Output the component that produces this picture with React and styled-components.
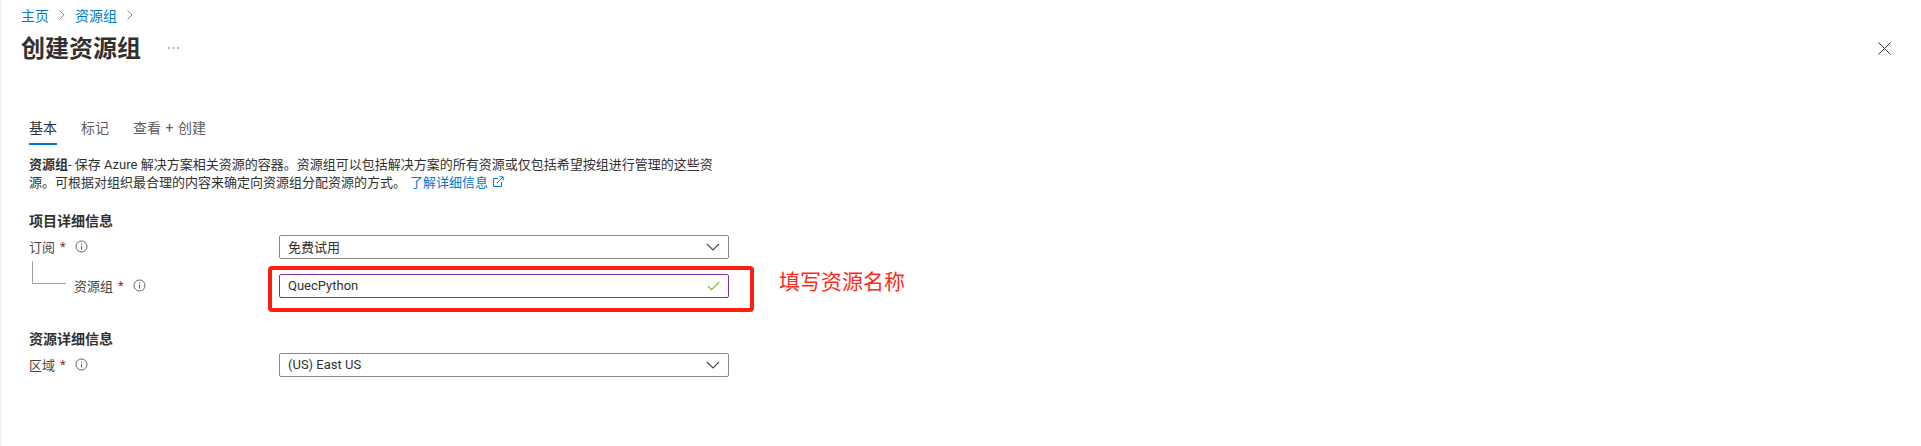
import React from 'react';
import styled, { createGlobalStyle } from 'styled-components';

const GlobalStyle = createGlobalStyle`
    html, body {
        margin: 0;
        padding: 0;
        background: #fff;
    }
    body {
        font-family: Roboto, "Noto Sans CJK SC", sans-serif;
        font-size: 13px;
        color: #323130;
    }
`;

const Page = styled.div`
    position: relative;
    width: 1921px;
    height: 446px;
    overflow: hidden;
    background: #fff;
    box-shadow: inset 1px 0 0 #f1f1f1;
`;

const Breadcrumb = styled.nav`
    display: flex;
    align-items: center;
    height: 30px;
    padding: 0 0 1px 21px;
    box-sizing: border-box;
    gap: 8px;
    font-size: 14px;
    color: #0078d4;
`;

const TitleRow = styled.header`
    display: flex;
    align-items: center;
    height: 36px;
    padding: 0 30px 0 21px;
`;

const Title = styled.h1`
    margin: 0 0 4px;
    font-size: 24px;
    font-weight: 700;
    color: #323130;
`;

const More = styled.span`
    margin-left: 27px;
    display: flex;
    color: #605e5c;
`;

const Close = styled.span`
    margin-left: auto;
    display: flex;
    color: #323130;
`;

const Tabs = styled.div`
    display: flex;
    gap: 24px;
    margin-top: 46px;
`;

const Tab = styled.div`
    height: 31px;
    line-height: 32px;
    font-size: 14px;
    word-spacing: 1px;
    color: ${p => (p.$active ? '#323130' : '#605e5c')};
    border-bottom: 2px solid ${p => (p.$active ? '#0078d4' : 'transparent')};
`;

const Content = styled.main`
    padding-left: 29px;
`;

const Description = styled.p`
    width: 690px;
    margin: 11px 0 0;
    font-size: 13px;
    line-height: 18px;
    color: #323130;
    b {
        font-weight: 700;
    }
`;

const LearnMore = styled.a`
    margin-left: 4px;
    color: #0078d4;
    svg {
        margin-left: 4px;
        vertical-align: -1px;
    }
`;

const SectionTitle = styled.h2`
    margin: ${p => p.$top}px 0 4px;
    height: 20px;
    line-height: 20px;
    font-size: 14px;
    font-weight: 700;
    color: #323130;
`;

const FormRow = styled.div`
    position: relative;
    display: grid;
    grid-template-columns: 250px 450px;
    align-items: center;
    height: 24px;
    margin-top: ${p => p.$top || 0}px;
`;

const Label = styled.label`
    display: flex;
    align-items: center;
    padding-left: ${p => (p.$nested ? 45 : 0)}px;
    padding-bottom: 1px;
    color: #484644;
    font-size: 13px;
`;

const Star = styled.span`
    margin-left: 5px;
    color: #a4262c;
`;

const InfoMark = styled.span`
    display: flex;
    margin-left: 9px;
    color: #605e5c;
`;

const Field = styled.div`
    display: flex;
    align-items: center;
    justify-content: space-between;
    box-sizing: border-box;
    height: 24px;
    padding: 0 8px 1px;
    border: 1px solid ${p => (p.$valid ? '#8a2da5' : '#8a8886')};
    border-radius: 2px;
    font-size: 13px;
    color: #323130;
`;

// the little elbow that ties the resource group row to the subscription row
const TreeLine = styled.span`
    position: absolute;
    left: 3px;
    top: -13px;
    width: 33px;
    height: 22px;
    border-left: 1px solid #a19f9d;
    border-bottom: 1px solid #a19f9d;
`;

// annotation drawn over the screenshot
const RedBox = styled.div`
    position: absolute;
    left: 268px;
    top: 266px;
    width: 486px;
    height: 46px;
    box-sizing: border-box;
    border: 4px solid #ff1f10;
    border-radius: 4px;
`;

const RedNote = styled.span`
    position: absolute;
    left: 779px;
    top: 268px;
    font-size: 21px;
    line-height: 28px;
    color: #ff2a1a;
`;

const Sep = () => (
    <svg width="10" height="12" viewBox="0 0 10 12" fill="none" stroke="#8a8886" strokeWidth="1">
        <path d="M2.5 1.5 L7 6 L2.5 10.5" />
    </svg>
);

const Chevron = () => (
    <svg width="14" height="8" viewBox="0 0 14 8" fill="none" stroke="#484644" strokeWidth="1.1">
        <path d="M1 1 L7 7 L13 1" />
    </svg>
);

const Check = () => (
    <svg width="13" height="10" viewBox="0 0 13 10" fill="none" stroke="#7ab648" strokeWidth="1.2">
        <path d="M1 5 L4.5 8.7 L12.2 1" />
    </svg>
);

const Info = () => (
    <svg width="13" height="13" viewBox="0 0 13 13" fill="none" stroke="currentColor" strokeWidth="1">
        <circle cx="6.5" cy="6.5" r="5.5" />
        <path d="M6.5 5.8 V9.6" />
        <circle cx="6.5" cy="3.9" r="0.6" fill="currentColor" stroke="none" />
    </svg>
);

const ExternalLink = () => (
    <svg width="12" height="12" viewBox="0 0 12 12" fill="none" stroke="#0078d4" strokeWidth="1">
        <path d="M6 2.5 H1.5 V10.5 H9.5 V6" />
        <path d="M5 7 L11 1 M7.5 0.8 H11.2 V4.5" />
    </svg>
);

const Dots = () => (
    <svg width="11" height="4" viewBox="0 0 11 4" fill="currentColor">
        <circle cx="1" cy="2" r="0.8" />
        <circle cx="5.5" cy="2" r="0.8" />
        <circle cx="10" cy="2" r="0.8" />
    </svg>
);

const Cross = () => (
    <svg width="13" height="13" viewBox="0 0 13 13" fill="none" stroke="currentColor" strokeWidth="1">
        <path d="M0.5 0.5 L12.5 12.5 M12.5 0.5 L0.5 12.5" />
    </svg>
);

const App = () => {
    return (
        <Page>
            <GlobalStyle />
            <Breadcrumb>
                <span>主页</span>
                <Sep />
                <span>资源组</span>
                <Sep />
            </Breadcrumb>
            <TitleRow>
                <Title>创建资源组</Title>
                <More><Dots /></More>
                <Close><Cross /></Close>
            </TitleRow>
            <Content>
                <Tabs>
                    <Tab $active>基本</Tab>
                    <Tab>标记</Tab>
                    <Tab>查看 + 创建</Tab>
                </Tabs>
                <Description>
                    <b>资源组</b>- 保存 Azure 解决方案相关资源的容器。资源组可以包括解决方案的所有资源或仅包括希望按组进行管理的这些资源。可根据对组织最合理的内容来确定向资源组分配资源的方式。
                    <LearnMore>了解详细信息<ExternalLink /></LearnMore>
                </Description>
                <SectionTitle $top={19}>项目详细信息</SectionTitle>
                <FormRow>
                    <Label>订阅<Star>*</Star><InfoMark><Info /></InfoMark></Label>
                    <Field>免费试用<Chevron /></Field>
                </FormRow>
                <FormRow $top={15}>
                    <TreeLine />
                    <Label $nested>资源组<Star>*</Star><InfoMark><Info /></InfoMark></Label>
                    <Field $valid>QuecPython<Check /></Field>
                </FormRow>
                <SectionTitle $top={31}>资源详细信息</SectionTitle>
                <FormRow>
                    <Label>区域<Star>*</Star><InfoMark><Info /></InfoMark></Label>
                    <Field>(US) East US<Chevron /></Field>
                </FormRow>
            </Content>
            <RedBox />
            <RedNote>填写资源名称</RedNote>
        </Page>
    );
};

export default App;
